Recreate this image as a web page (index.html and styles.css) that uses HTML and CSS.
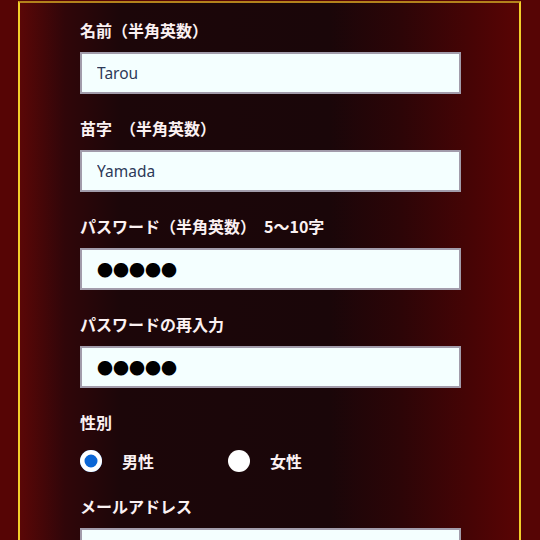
FILE: index.html
```html
<!DOCTYPE html>
<html lang="ja">
<head>
<meta charset="utf-8">
<title>登録フォーム</title>
<link rel="stylesheet" href="styles.css">
</head>
<body>
<div class="panel">
  <form class="form">
    <div class="field">
      <label class="label" for="fname">名前（半角英数）</label>
      <input class="input" id="fname" type="text" value="Tarou">
    </div>
    <div class="field">
      <label class="label" for="lname">苗字&ensp;（半角英数）</label>
      <input class="input" id="lname" type="text" value="Yamada">
    </div>
    <div class="field">
      <label class="label" for="pw">パスワード（半角英数）&ensp;5〜10字</label>
      <input class="input input-pw" id="pw" type="text" value="●●●●●">
    </div>
    <div class="field">
      <label class="label" for="pw2">パスワードの再入力</label>
      <input class="input input-pw" id="pw2" type="text" value="●●●●●">
    </div>
    <div class="field field-gender">
      <span class="label">性別</span>
      <div class="radios">
        <label class="option"><input class="radio" type="radio" name="sex" checked><span>男性</span></label>
        <label class="option"><input class="radio" type="radio" name="sex"><span>女性</span></label>
      </div>
    </div>
    <div class="field">
      <label class="label" for="mail">メールアドレス</label>
      <input class="input" id="mail" type="text" value="">
    </div>
  </form>
</div>
</body>
</html>
```

FILE: styles.css
```css
html, body {
  margin: 0;
  padding: 0;
  background: #560505;
}
body {
  font-family: "Noto Sans CJK JP", "Noto Sans", sans-serif;
  overflow: hidden;
}
.panel {
  box-sizing: border-box;
  width: 503px;
  margin: 1px 0 0 18px;
  border: 2px solid #f2cf2a;
  border-top-color: #b3821c;
  background: linear-gradient(90deg, #5a0707 0%, #300609 9%, #1c0609 20%, #1a0609 62%, #2c0507 76%, #460405 90%, #590404 100%);
  padding: 15px 0 40px 60px;
}
.form {
  display: flex;
  flex-direction: column;
}
.field {
  display: flex;
  flex-direction: column;
  margin-bottom: 22px;
}
.label {
  display: block;
  height: 24px;
  line-height: 24px;
  margin-bottom: 10px;
  color: #fbf1f2;
  font-size: 16px;
  font-weight: 700;
  white-space: nowrap;
}
.input {
  box-sizing: border-box;
  width: 381px;
  height: 42px;
  margin: 0;
  padding: 0 15px;
  border: 2px solid #a29cab;
  border-radius: 0;
  background: #f4ffff;
  color: #2c3958;
  font-family: "Noto Sans", sans-serif;
  font-size: 15.5px;
  outline: none;
}
.input-pw {
  color: #000;
  font-family: "Noto Sans CJK JP", sans-serif;
  font-size: 16px;
}
.field-gender {
  margin-bottom: 16px;
}
.radios {
  display: flex;
  align-items: center;
  height: 34px;
}
.option {
  display: flex;
  align-items: center;
  width: 148px;
  color: #fbf1f2;
  font-size: 16px;
  font-weight: 700;
}
.radio {
  -webkit-appearance: none;
  appearance: none;
  width: 22px;
  height: 22px;
  margin: 0 20px 0 0;
  border-radius: 50%;
  background: #fff;
  flex: none;
}
.radio:checked {
  background: #0b66d6;
  box-shadow: inset 0 0 0 4.5px #fff;
}
```
